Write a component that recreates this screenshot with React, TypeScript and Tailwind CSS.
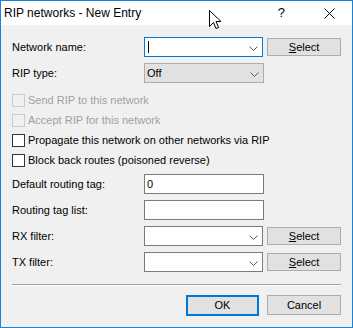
import type { ReactNode } from "react";

const font = { fontFamily: '"Liberation Sans", Arial, sans-serif' };

function Chevron() {
  return (
    <svg className="absolute right-[4px] top-[8px]" width="9" height="5" viewBox="0 0 9 5">
      <path d="M0.5 0.5 L4.5 4.5 L8.5 0.5" fill="none" stroke="#5a5a5a" strokeWidth="1" />
    </svg>
  );
}

function Combo({
  children,
  focused = false,
  gray = false,
}: {
  children?: ReactNode;
  focused?: boolean;
  gray?: boolean;
}) {
  return (
    <div
      className={`relative flex h-[20px] w-[120px] items-center border pl-[2px] text-[11px] text-black ${
        focused ? "border-[#0078d7] bg-white" : gray ? "border-[#adadad] bg-[#e1e1e1]" : "border-[#7a7a7a] bg-white"
      }`}
    >
      {children}
      <Chevron />
    </div>
  );
}

function TextBox({ value }: { value?: string }) {
  return (
    <div className="flex h-[20px] w-[120px] items-center border border-[#7a7a7a] bg-white pl-[2px] text-[11px] text-black">
      {value}
    </div>
  );
}

function SelectButton() {
  return (
    <div className="ml-[4px] mt-[1px] flex h-[18px] w-[74px] items-center justify-center self-start border border-[#adadad] bg-[#e1e1e1] text-[11px] text-black">
      <span>
        <u>S</u>elect
      </span>
    </div>
  );
}

function Row({ label, children }: { label: string; children: ReactNode }) {
  return (
    <div className="flex h-[20px] items-center">
      <div className="w-[132px] text-[11px] text-black">{label}</div>
      {children}
    </div>
  );
}

function Check({ label, disabled = false }: { label: string; disabled?: boolean }) {
  return (
    <div className="flex h-[20px] items-center">
      <div
        className={`h-[13px] w-[13px] border ${
          disabled ? "border-[#cccccc] bg-[#f0f0f0]" : "border-[#333333] bg-white"
        }`}
      />
      <span className={`ml-[3px] text-[11px] ${disabled ? "text-[#a0a0a0]" : "text-black"}`}>{label}</span>
    </div>
  );
}

export default function App() {
  return (
    <div
      className="relative flex h-[328px] w-[353px] flex-col border border-[#1883d7] bg-[#f0f0f0]"
      style={font}
    >
      <div className="flex h-[24px] items-center bg-white pl-[3px] text-[12px] text-black">
        <span className="flex-1">RIP networks - New Entry</span>
        <span className="mr-[39px] text-[13px]">?</span>
        <svg className="mr-[17px]" width="11" height="11" viewBox="0 0 11 11">
          <path d="M0.5 0.5 L10.5 10.5 M10.5 0.5 L0.5 10.5" stroke="#000" strokeWidth="1" />
        </svg>
      </div>

      <div className="flex flex-col px-[11px] pt-[12px]">
        <Row label="Network name:">
          <Combo focused>
            <div className="ml-[1px] h-[12px] w-[1px] bg-black" />
          </Combo>
          <SelectButton />
        </Row>
        <div className="mt-[6px]">
          <Row label="RIP type:">
            <Combo gray>Off</Combo>
          </Row>
        </div>

        <div className="mt-[7px] flex flex-col">
          <Check label="Send RIP to this network" disabled />
          <Check label="Accept RIP for this network" disabled />
          <Check label="Propagate this network on other networks via RIP" />
          <Check label="Block back routes (poisoned reverse)" />
        </div>

        <div className="mt-[4px] flex flex-col gap-[6px]">
          <Row label="Default routing tag:">
            <TextBox value="0" />
          </Row>
          <Row label="Routing tag list:">
            <TextBox />
          </Row>
          <Row label="RX filter:">
            <Combo />
            <SelectButton />
          </Row>
          <Row label="TX filter:">
            <Combo />
            <SelectButton />
          </Row>
        </div>

        <div className="mt-[12px] border-t border-b border-t-[#a0a0a0] border-b-white" />

        <div className="mt-[9px] flex justify-end">
          <div className="flex h-[21px] w-[73px] items-center justify-center border-2 border-[#0078d7] bg-[#e1e1e1] text-[11px] text-black">
            OK
          </div>
          <div className="ml-[8px] flex h-[20px] w-[74px] items-center justify-center border border-[#adadad] bg-[#e1e1e1] text-[11px] text-black">
            Cancel
          </div>
        </div>
      </div>

      <svg className="absolute left-[208px] top-[9px]" width="14" height="21" viewBox="0 0 14 21">
        <path
          d="M0.5 0.5 L0.5 16.5 L4.5 12.5 L7 18.5 L9.5 17.5 L7 11.5 L12 11.5 Z"
          fill="#fff"
          stroke="#000"
          strokeWidth="1"
          strokeLinejoin="miter"
        />
      </svg>
    </div>
  );
}
